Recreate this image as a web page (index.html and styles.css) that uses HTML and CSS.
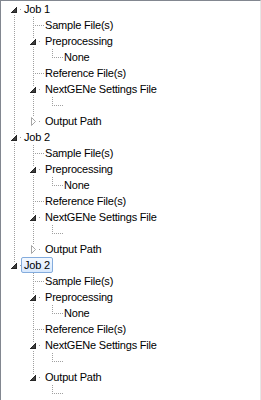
FILE: index.html
```html
<!DOCTYPE html>
<html>
<head>
<meta charset="utf-8">
<link rel="stylesheet" href="styles.css">
</head>
<body>
<svg class="defs" aria-hidden="true">
  <defs>
    <g id="v"><line x1="13.5" y1="0" x2="13.5" y2="16" class="dl"/></g>
    <g id="tee"><line x1="13.5" y1="0" x2="13.5" y2="16" class="dl"/><line x1="13" y1="8.5" x2="24" y2="8.5" class="dl"/></g>
    <g id="elb"><line x1="13.5" y1="0" x2="13.5" y2="9" class="dl"/><line x1="13" y1="8.5" x2="24" y2="8.5" class="dl"/></g>
    <g id="tri-open"><polygon points="15.5,6.5 15.5,11.5 10.5,11.5" class="to"/><rect x="19" y="8" width="1" height="1" class="dot"/></g>
    <g id="tri-closed"><polygon points="11.5,4.5 15.5,8.5 11.5,12.5" class="tc"/><rect x="19" y="8" width="1" height="1" class="dot"/></g>
    <g id="above5"><line x1="13.5" y1="0" x2="13.5" y2="5" class="dl"/></g>
    <g id="above3"><line x1="13.5" y1="0" x2="13.5" y2="3" class="dl"/></g>
    <g id="below"><line x1="13.5" y1="14" x2="13.5" y2="16" class="dl"/></g>
  </defs>
</svg>

<div class="tree">
  <!-- Job 1 -->
  <div class="row"><svg class="g n0"><use href="#below"/><use href="#tri-open"/></svg><span class="lbl">Job 1</span></div>
  <div class="row"><svg class="g"><use href="#v"/></svg><svg class="g n"><use href="#tee"/></svg><span class="lbl">Sample File(s)</span></div>
  <div class="row"><svg class="g"><use href="#v"/></svg><svg class="g n"><use href="#above5"/><use href="#below"/><use href="#tri-open"/></svg><span class="lbl">Preprocessing</span></div>
  <div class="row"><svg class="g"><use href="#v"/></svg><svg class="g"><use href="#v"/></svg><svg class="g n"><use href="#elb"/></svg><span class="lbl">None</span></div>
  <div class="row"><svg class="g"><use href="#v"/></svg><svg class="g n"><use href="#tee"/></svg><span class="lbl">Reference File(s)</span></div>
  <div class="row"><svg class="g"><use href="#v"/></svg><svg class="g n"><use href="#above5"/><use href="#below"/><use href="#tri-open"/></svg><span class="lbl">NextGENe Settings File</span></div>
  <div class="row"><svg class="g"><use href="#v"/></svg><svg class="g"><use href="#v"/></svg><svg class="g n"><use href="#elb"/></svg></div>
  <div class="row"><svg class="g"><use href="#v"/></svg><svg class="g n"><use href="#above3"/><use href="#tri-closed"/></svg><span class="lbl">Output Path</span></div>

  <!-- Job 2 -->
  <div class="row"><svg class="g n0"><use href="#above5"/><use href="#below"/><use href="#tri-open"/></svg><span class="lbl">Job 2</span></div>
  <div class="row"><svg class="g"><use href="#v"/></svg><svg class="g n"><use href="#tee"/></svg><span class="lbl">Sample File(s)</span></div>
  <div class="row"><svg class="g"><use href="#v"/></svg><svg class="g n"><use href="#above5"/><use href="#below"/><use href="#tri-open"/></svg><span class="lbl">Preprocessing</span></div>
  <div class="row"><svg class="g"><use href="#v"/></svg><svg class="g"><use href="#v"/></svg><svg class="g n"><use href="#elb"/></svg><span class="lbl">None</span></div>
  <div class="row"><svg class="g"><use href="#v"/></svg><svg class="g n"><use href="#tee"/></svg><span class="lbl">Reference File(s)</span></div>
  <div class="row"><svg class="g"><use href="#v"/></svg><svg class="g n"><use href="#above5"/><use href="#below"/><use href="#tri-open"/></svg><span class="lbl">NextGENe Settings File</span></div>
  <div class="row"><svg class="g"><use href="#v"/></svg><svg class="g"><use href="#v"/></svg><svg class="g n"><use href="#elb"/></svg></div>
  <div class="row"><svg class="g"><use href="#v"/></svg><svg class="g n"><use href="#above3"/><use href="#tri-closed"/></svg><span class="lbl">Output Path</span></div>

  <!-- Job 2 (selected) -->
  <div class="row"><svg class="g n0"><use href="#above5"/><use href="#tri-open"/></svg><span class="lbl sel">Job 2</span></div>
  <div class="row"><svg class="g"></svg><svg class="g n"><use href="#tee"/></svg><span class="lbl">Sample File(s)</span></div>
  <div class="row"><svg class="g"></svg><svg class="g n"><use href="#above5"/><use href="#below"/><use href="#tri-open"/></svg><span class="lbl">Preprocessing</span></div>
  <div class="row"><svg class="g"></svg><svg class="g"><use href="#v"/></svg><svg class="g n"><use href="#elb"/></svg><span class="lbl">None</span></div>
  <div class="row"><svg class="g"></svg><svg class="g n"><use href="#tee"/></svg><span class="lbl">Reference File(s)</span></div>
  <div class="row"><svg class="g"></svg><svg class="g n"><use href="#above5"/><use href="#below"/><use href="#tri-open"/></svg><span class="lbl">NextGENe Settings File</span></div>
  <div class="row"><svg class="g"></svg><svg class="g"><use href="#v"/></svg><svg class="g n"><use href="#elb"/></svg></div>
  <div class="row"><svg class="g"></svg><svg class="g n"><use href="#above5"/><use href="#tri-open"/></svg><span class="lbl">Output Path</span></div>
  <div class="row"><svg class="g"></svg><svg class="g"></svg><svg class="g n"><use href="#elb"/></svg></div>
</div>
</body>
</html>
```

FILE: styles.css
```css
html, body {
  margin: 0;
  padding: 0;
  background: #ffffff;
}

.defs {
  display: block;
  width: 0;
  height: 0;
  overflow: hidden;
}

.tree {
  width: 261px;
  height: 400px;
  box-sizing: border-box;
  border-top: 1px solid #828790;
  border-left: 1px solid #828790;
  border-right: 1px solid #e6e6e6;
  overflow: hidden;
  background: #ffffff;
  font-family: "Liberation Sans", Arial, sans-serif;
  font-size: 11px;
  letter-spacing: -0.2px;
  color: #000000;
}

.row {
  display: flex;
  align-items: center;
  height: 16px;
  flex: none;
}

.g {
  display: block;
  flex: none;
  width: 19px;
  height: 16px;
  shape-rendering: crispEdges;
}

.g.n {
  width: 25px;
}

.g.n0 {
  width: 23px;
}

.dl {
  stroke: #a0a0a0;
  stroke-width: 1;
  stroke-dasharray: 1 1;
  fill: none;
}

.dot {
  fill: #a0a0a0;
}

.to {
  fill: #3f3f3f;
  stroke: #262626;
  stroke-width: 1;
}

.tc {
  fill: #ffffff;
  stroke: #a6a6a6;
  stroke-width: 1;
  shape-rendering: auto;
}

.lbl {
  display: block;
  margin-left: -3px;
  padding: 0 2px;
  border: 1px solid transparent;
  border-radius: 2px;
  line-height: 14px;
  white-space: nowrap;
}

.lbl.sel {
  border-color: #84acdd;
  background: linear-gradient(#f4f9ff, #d7e8fd);
}
```
